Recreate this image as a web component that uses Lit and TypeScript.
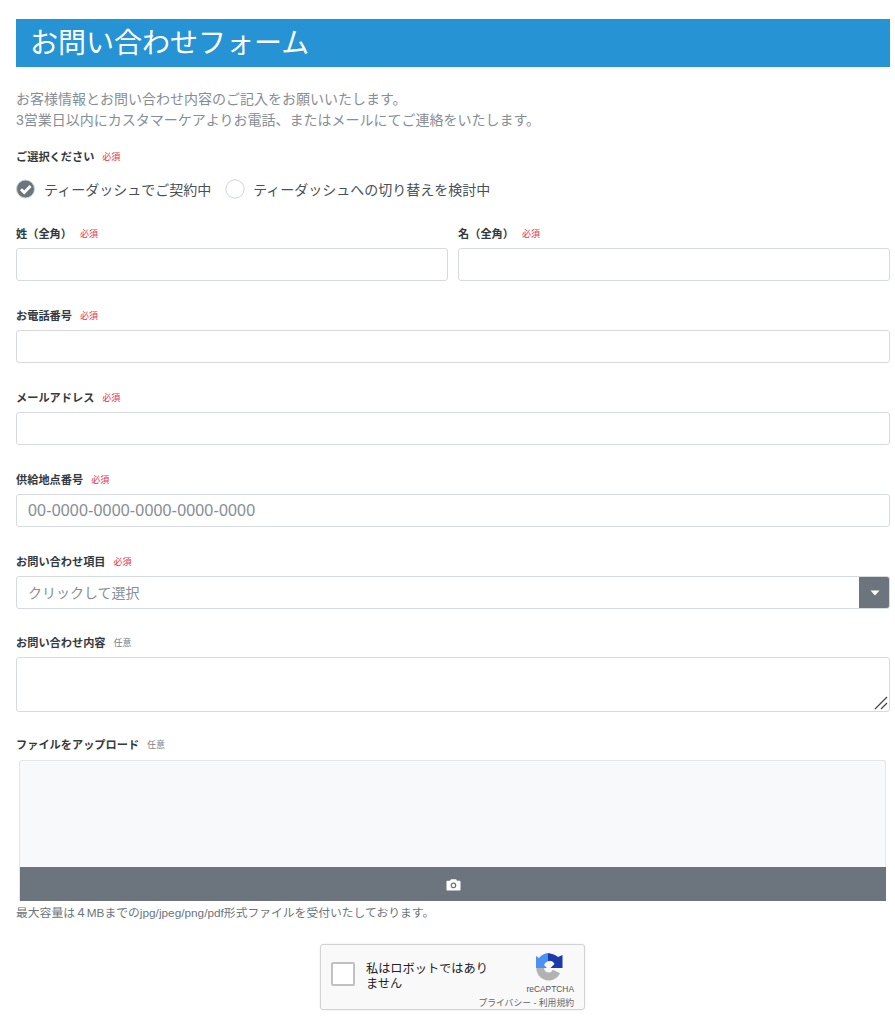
import { LitElement, html, css } from "lit";
import { customElement } from "lit/decorators.js";

const req = html`<span class="req">必須</span>`;
const opt = html`<span class="opt">任意</span>`;

@customElement("app-root")
export class AppRoot extends LitElement {
  static styles = css`
    :host {
      display: block;
      width: 895px;
      height: 1024px;
      overflow: hidden;
      box-sizing: border-box;
      padding: 19px 5px 0 16px;
      background: #fff;
      font-family: "Liberation Sans", "Noto Sans CJK JP", sans-serif;
      color: #343a40;
    }
    * { box-sizing: border-box; }
    h1 {
      margin: 0;
      height: 48px;
      background: #2694d4;
      color: #fff;
      font-size: 28px;
      font-weight: 400;
      line-height: 50px;
      padding-left: 14px;
      overflow: hidden;
    }
    .intro {
      margin: 22px 0 0;
      font-size: 14px;
      line-height: 21px;
      color: #868e96;
    }
    .label {
      display: flex;
      align-items: center;
      height: 16px;
      font-size: 11.2px;
      font-weight: 700;
      color: #343a40;
      white-space: nowrap;
    }
    .req, .opt { font-size: 9px; font-weight: 400; margin-left: 8px; }
    .req { color: #e8304a; }
    .opt { color: #7b838a; }
    .choice { margin-top: 17px; }
    .radios {
      display: flex;
      align-items: center;
      margin-top: 14px;
      height: 22px;
      font-size: 14px;
      color: #495057;
      white-space: nowrap;
    }
    .radios svg { display: block; flex: none; margin-right: 8px; }
    .radios span + svg { margin-left: 14px; }
    .field { margin-top: 26px; }
    .field .box { margin-top: 7px; }
    .first { margin-top: 25px; }
    .cols { display: grid; grid-template-columns: 432px 432px; gap: 10px; }
    .cols .field { margin-top: 0; }
    .box {
      display: flex;
      align-items: center;
      height: 33px;
      border: 1px solid #d6dbe0;
      border-radius: 3px;
      padding-left: 11px;
      font-size: 14px;
      color: #868e96;
      background: #fff;
      overflow: hidden;
    }
    .num { font-size: 16px; letter-spacing: 0.18px; }
    .select { padding-right: 0; justify-content: space-between; }
    .select-text { margin-bottom: 2px; }
    .caret {
      width: 31px;
      height: 33px;
      flex: none;
      background: #6c757d;
      display: flex;
      align-items: center;
      justify-content: center;
      margin-right: -1px;
    }
    .field.last { margin-top: 25px; }
    .area { height: 55px; position: relative; }
    .grip { position: absolute; right: 1px; bottom: 1px; }
    .uplabel { margin-top: 24px; }
    .upload {
      margin: 8px 0 0 3px;
      width: 867px;
      height: 141px;
      border: 1px solid #e3e6e9;
      border-bottom: 0;
      border-radius: 3px 3px 0 0;
      background: #f8f9fa;
      display: flex;
      flex-direction: column;
      justify-content: flex-end;
    }
    .band {
      height: 34px;
      margin-right: -1px;
      background: #6c757d;
      display: flex;
      align-items: center;
      justify-content: center;
    }
    .hint {
      margin: 5px 0 0;
      font-size: 11.8px;
      line-height: 15px;
      color: #6c757d;
    }
    .captcha {
      margin: 23px 0 0 304px;
      width: 265px;
      height: 66px;
      border: 1px solid #d3d3d3;
      border-radius: 3px;
      background: #f9f9f9;
      box-shadow: 0 0 3px rgba(0, 0, 0, 0.08);
      display: flex;
      position: relative;
    }
    .check {
      width: 24px;
      height: 24px;
      margin: 17px 0 0 10px;
      background: #fff;
      border: 2px solid #c1c1c1;
      border-radius: 2px;
      flex: none;
    }
    .robot {
      margin: 17px 0 0 11px;
      width: 130px;
      font-size: 12.2px;
      line-height: 15px;
      color: #222;
    }
    .brand {
      position: absolute;
      right: 10px;
      top: 8px;
      width: 50px;
      text-align: right;
      font-size: 8.4px;
      line-height: 11px;
      color: #555;
    }
    .brand svg { display: block; margin: 0 11px 3px auto; }
    .terms {
      position: absolute;
      right: 10px;
      bottom: 0;
      font-size: 8.8px;
      line-height: 11px;
      color: #666;
      white-space: nowrap;
    }
  `;

  render() {
    return html`
      <h1>お問い合わせフォーム</h1>
      <p class="intro">お客様情報とお問い合わせ内容のご記入をお願いいたします。<br />3営業日以内にカスタマーケアよりお電話、またはメールにてご連絡をいたします。</p>

      <div class="label choice">ご選択ください${req}</div>
      <div class="radios">
        <svg width="20" height="20" viewBox="0 0 20 20">
          <circle cx="9.5" cy="10" r="9" fill="#6c757d" stroke="#ced4da" stroke-width="1"></circle>
          <path d="M5 10.200l3.200 3.300L14.500 7" fill="none" stroke="#fff" stroke-width="2.800"></path>
        </svg>
        <span>ティーダッシュでご契約中</span>
        <svg width="20" height="20" viewBox="0 0 20 20">
          <circle cx="10" cy="10" r="9.200" fill="#fff" stroke="#ced4da" stroke-width="1"></circle>
        </svg>
        <span>ティーダッシュへの切り替えを検討中</span>
      </div>

      <div class="cols first">
        <div class="field"><div class="label">姓（全角）${req}</div><div class="box"></div></div>
        <div class="field"><div class="label">名（全角）${req}</div><div class="box"></div></div>
      </div>
      <div class="field"><div class="label">お電話番号${req}</div><div class="box"></div></div>
      <div class="field"><div class="label">メールアドレス${req}</div><div class="box"></div></div>
      <div class="field"><div class="label">供給地点番号${req}</div><div class="box num">00-0000-0000-0000-0000-0000</div></div>
      <div class="field">
        <div class="label">お問い合わせ項目${req}</div>
        <div class="box select">
          <span class="select-text">クリックして選択</span>
          <span class="caret">
            <svg width="10" height="6" viewBox="0 0 10 6"><path d="M0.500 0.500h9L5 5.500z" fill="#fff"></path></svg>
          </span>
        </div>
      </div>
      <div class="field last">
        <div class="label">お問い合わせ内容${opt}</div>
        <div class="box area">
          <svg class="grip" width="14" height="14" viewBox="0 0 14 14">
            <path d="M1 13L13 1M7 13l6-6" stroke="#444" stroke-width="1.200" fill="none"></path>
          </svg>
        </div>
      </div>

      <div class="label uplabel">ファイルをアップロード${opt}</div>
      <div class="upload">
        <div class="band">
          <svg width="15" height="13" viewBox="0 0 15 13">
            <path fill="#fff" fill-rule="evenodd" d="M5 1.200h5l1 1.500h2.400c.6 0 1.100.5 1.100 1.100v7.600c0 .6-.5 1.100-1.100 1.100H1.600c-.6 0-1.100-.5-1.100-1.100V3.800c0-.6.5-1.100 1.100-1.100H4zM7.500 4.600a2.800 2.800 0 1 0 0 5.600 2.800 2.800 0 0 0 0-5.600zm0 1.200a1.600 1.600 0 1 1 0 3.200 1.600 1.600 0 0 1 0-3.200z"></path>
          </svg>
        </div>
      </div>
      <p class="hint">最大容量は４MBまでのjpg/jpeg/png/pdf形式ファイルを受付いたしております。</p>

      <div class="captcha">
        <div class="check"></div>
        <div class="robot">私はロボットではありません</div>
        <div class="brand">
          <svg width="28" height="28" viewBox="0 0 28 28">
            <path d="M5.500 13A8.500 8.500 0 0 0 21.500 18.500" fill="none" stroke="#b2b2b2" stroke-width="8"></path>
            <path d="M15 0A14 14 0 0 0 4 5L1 3V15H12L9 12A7 7 0 0 1 15 8z" fill="#4a90f5"></path>
            <path d="M13 .5A14 14 0 0 1 23 4L27.500 2V15H15.500L19.500 11A6 6 0 0 0 13 8z" fill="#1c3aa9"></path>
          </svg>
          reCAPTCHA
        </div>
        <div class="terms">プライバシー - 利用規約</div>
      </div>
    `;
  }
}
